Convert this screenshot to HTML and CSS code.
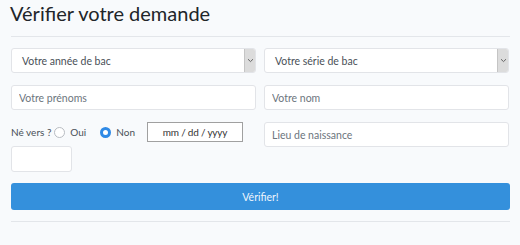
FILE: index.html
```html
<!DOCTYPE html>
<html lang="fr">
<head>
<meta charset="utf-8">
<link rel="stylesheet" href="styles.css">
</head>
<body>
<div class="page">
  <h1 class="title">Vérifier votre demande</h1>
  <hr class="rule">
  <div class="grid">
    <div class="select"><span class="select-text">Votre année de bac</span><span class="select-arrow"><svg width="7" height="5" viewBox="0 0 7 5"><path d="M1 1.2 L3.5 3.6 L6 1.2" fill="none" stroke="#666" stroke-width="1"/></svg></span></div>
    <div class="select"><span class="select-text">Votre série de bac</span><span class="select-arrow"><svg width="7" height="5" viewBox="0 0 7 5"><path d="M1 1.2 L3.5 3.6 L6 1.2" fill="none" stroke="#666" stroke-width="1"/></svg></span></div>
    <input class="field" type="text" placeholder="Votre prénoms">
    <input class="field" type="text" placeholder="Votre nom">
    <div class="born">
      <div class="born-line">
        <span class="label">Né vers ?</span>
        <span class="radio"></span><span class="radio-label">Oui</span>
        <span class="radio checked"></span><span class="radio-label radio-label-last">Non</span>
        <span class="date">mm / dd / yyyy</span>
      </div>
      <input class="small-field" type="text">
    </div>
    <input class="field" type="text" placeholder="Lieu de naissance">
  </div>
  <div class="button">Vérifier!</div>
  <hr class="rule rule-bottom">
</div>
</body>
</html>
```
FILE: styles.css
```css
html, body {
  margin: 0;
  padding: 0;
  background: #f8fafc;
}
body {
  font-family: Lato, "Open Sans", sans-serif;
  color: #212529;
}
.page {
  width: 499px;
  margin-left: 11px;
  padding-top: 1px;
}
.title {
  margin: 0 0 0 -1px;
  font-size: 20px;
  font-weight: 400;
  line-height: 25px;
  color: #212529;
}
.rule {
  border: 0;
  border-top: 1px solid #e3e6ea;
  margin: 10px 0 11px 0;
  width: 499px;
}
.grid {
  display: grid;
  grid-template-columns: 245px 245px;
  column-gap: 8px;
  row-gap: 12px;
}
.select {
  height: 25px;
  box-sizing: border-box;
  border: 1px solid #e2e4e8;
  border-radius: 3px;
  background: #fff;
  display: flex;
  align-items: center;
  overflow: hidden;
}
.select-text {
  flex: 1;
  padding-left: 10px;
  font-size: 10.5px;
  color: #495057;
}
.select-arrow {
  width: 10px;
  height: 23px;
  background: #dcdcdc;
  border-left: 1px solid #c5c5c5;
  display: flex;
  align-items: center;
  justify-content: center;
}
.field {
  height: 25px;
  box-sizing: border-box;
  border: 1px solid #e2e4e8;
  border-radius: 3px;
  background: #fff;
  padding: 0 7px;
  font-family: inherit;
  font-size: 10.5px;
  color: #495057;
  outline: none;
  margin: 0;
  width: 100%;
}
.field::placeholder {
  color: #6c757d;
}
.born {
  display: flex;
  flex-direction: column;
  gap: 4px;
}
.born-line {
  display: flex;
  align-items: center;
  height: 20px;
  font-size: 10px;
  color: #495057;
}
.label {
  margin-right: 3px;
}
.radio {
  width: 11px;
  height: 11px;
  box-sizing: border-box;
  border: 1px solid #b8bcc2;
  border-radius: 50%;
  background: #fff;
  margin-right: 5px;
}
.radio.checked {
  border: 3px solid #2f8ae6;
  background: #fff;
}
.radio-label {
  margin-right: 14px;
}
.radio-label-last {
  margin-right: 12px;
}
.date {
  width: 96px;
  height: 20px;
  box-sizing: border-box;
  border: 1px solid #a0a0a0;
  background: #fff;
  display: flex;
  align-items: center;
  justify-content: center;
  color: #333;
  font-size: 10px;
  letter-spacing: -0.2px;
}
.small-field {
  width: 61px;
  height: 26px;
  box-sizing: border-box;
  border: 1px solid #e2e4e8;
  border-radius: 3px;
  background: #fff;
  margin: 0;
  padding: 0;
  outline: none;
}
.button {
  margin-top: 11px;
  height: 27px;
  border-radius: 3px;
  background: #3490dc;
  color: #eef5fc;
  font-size: 10.5px;
  display: flex;
  align-items: center;
  justify-content: center;
}
.rule-bottom {
  margin: 11px 0 0 0;
}
```
